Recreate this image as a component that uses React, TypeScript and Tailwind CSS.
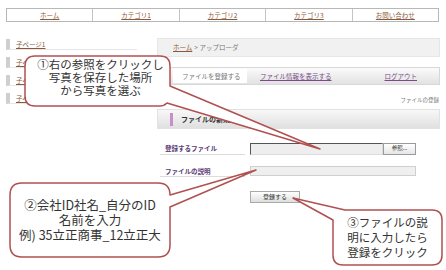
import React from "react";

const navItems = ["ホーム", "カテゴリ1", "カテゴリ2", "カテゴリ3", "お問い合わせ"];
const sideItems = ["子ページ1", "子ページ2", "子ページ3", "子ページ4"];

export default function App() {
  return (
    <div className="relative w-[446px] h-[270px] overflow-hidden bg-white font-['Noto_Sans_CJK_JP','Noto_Sans',sans-serif] leading-none">
      {/* nav */}
      <div className="pt-[8px] pl-[6px]">
        <div className="flex h-[14px] w-[433px] border border-[#b8b8b8]">
          {navItems.map((t, i) => (
            <div
              key={t}
              className={
                "flex-1 flex items-center justify-center text-[6.5px] text-[#8a5a3a] underline " +
                (i > 0 ? "border-l border-[#c4c4c4]" : "")
              }
            >
              {t}
            </div>
          ))}
        </div>
      </div>

      {/* body */}
      <div className="flex mt-[16px]">
        <div className="ml-[6px] w-[131px] pt-[1px] flex flex-col gap-[7px]">
          {sideItems.map((t) => (
            <div
              key={t}
              className="h-[11px] flex items-center border-l-[4px] border-l-[#cfcfcf] border-b border-b-[#e6e6e6] pl-[6px] text-[6.5px] text-[#8a5a3a] underline"
            >
              {t}
            </div>
          ))}
        </div>

        <div className="ml-[20px] w-[283px] flex flex-col">
          <div className="h-[19px] bg-[#f1f1f1] border border-[#e6e6e6] flex items-center pl-[15px] text-[6.5px]">
            <span className="text-[#8a5a3a] underline">ホーム</span>
            <span className="text-[#777] ml-[2px]">&gt; アップローダ</span>
          </div>

          <div className="mt-[10px] h-[18px] border border-[#d8d8d8] bg-gradient-to-b from-[#fbfbfb] to-[#e2e2e2] flex items-center text-[6.5px]">
            <div className="ml-[15px] h-[14px] w-[74px] bg-white flex items-center pl-[9px] text-[#777]">
              ファイルを登録する
            </div>
            <div className="ml-[13px] text-[#7a4a8a] underline">ファイル情報を表示する</div>
            <div className="ml-auto mr-[22px] text-[#7a4a8a] underline">ログアウト</div>
          </div>

          <div className="h-[24px] flex items-end justify-end pb-[6px] pr-[1px] text-[5.5px] text-[#777]">
            ファイルの登録
          </div>

          <div className="h-[20px] bg-gradient-to-b from-[#f8f8f8] to-[#e0e0e0] border border-[#e2e2e2] flex items-center">
            <div className="ml-[12px] w-[3px] h-[13px] bg-[#c78ec7]" />
            <div className="ml-[8px] font-bold text-[7px] text-[#333]">ファイルの新規登録</div>
          </div>

          <div className="mt-[14px] flex h-[12px]">
            <div className="ml-[3px] w-[85px] h-full border-b border-[#dcdcdc] pl-[5px] flex items-center text-[6.5px] font-bold text-[#5c3d78]">
              登録するファイル
            </div>
            <div className="ml-[5px] w-[166px] h-full flex">
              <div className="flex-1 bg-[#eeeeee] border-t border-l border-[#555] border-r border-b border-r-[#dcdcdc] border-b-[#dcdcdc]" />
              <div className="w-[33px] bg-gradient-to-b from-white to-[#e6e6e6] border border-[#9a9a9a] flex items-center justify-center text-[5.5px] text-[#333]">
                参照...
              </div>
            </div>
          </div>

          <div className="mt-[11px] flex h-[11px]">
            <div className="ml-[3px] w-[85px] h-full border-b border-[#dcdcdc] pl-[5px] flex items-center text-[6.5px] font-bold text-[#5c3d78]">
              ファイルの説明
            </div>
            <div className="ml-[5px] w-[166px] h-[10px] bg-[#efefef] border border-[#cfcfcf]" />
          </div>

          <div className="mt-[14px] ml-[93px] w-[50px] h-[12px] bg-gradient-to-b from-white to-[#dedede] border border-[#aaa] flex items-center justify-center text-[6px] text-[#333]">
            登録する
          </div>
        </div>
      </div>

      {/* callouts overlay */}
      <div className="absolute inset-0 pointer-events-none">
        <svg width="446" height="270" viewBox="0 0 446 270" className="absolute left-0 top-0">
          <path
            d="M35 56 H160 Q170 56 170 66 V86 L320 149 L167 103 Q164 106 160 106 H35 Q25 106 25 96 V66 Q25 56 35 56 Z"
            fill="white"
            stroke="#b05050"
            strokeWidth="1.5"
            strokeLinejoin="round"
          />
          <path
            d="M22 183 H158 Q170 183 170 195 L256 170 L170 207 V245 Q170 257 158 257 H22 Q10 257 10 245 V195 Q10 183 22 183 Z"
            fill="white"
            stroke="#b05050"
            strokeWidth="1.5"
            strokeLinejoin="round"
          />
          <path
            d="M345 210 H432 Q442 210 442 220 V255 Q442 265 432 265 H343 Q333 265 333 255 V220 L293 198 Z"
            fill="white"
            stroke="#b05050"
            strokeWidth="1.5"
            strokeLinejoin="round"
          />
        </svg>

        <div className="absolute left-[28px] top-[58px] w-[145px] flex flex-col items-center text-[11.5px] leading-[13px] text-[#333]">
          <div>①右の参照をクリックし</div>
          <div>写真を保存した場所</div>
          <div>から写真を選ぶ</div>
        </div>

        <div className="absolute left-[10px] top-[197px] w-[160px] flex flex-col items-center text-[12.5px] leading-[15px] text-[#333]">
          <div>②会社ID社名_自分のID</div>
          <div>名前を入力</div>
          <div>例) 35立正商事_12立正大</div>
        </div>

        <div className="absolute left-[333px] top-[215px] w-[109px] flex flex-col items-center text-[11.5px] leading-[15px] text-[#333]">
          <div>③ファイルの説</div>
          <div>明に入力したら</div>
          <div>登録をクリック</div>
        </div>
      </div>
    </div>
  );
}
